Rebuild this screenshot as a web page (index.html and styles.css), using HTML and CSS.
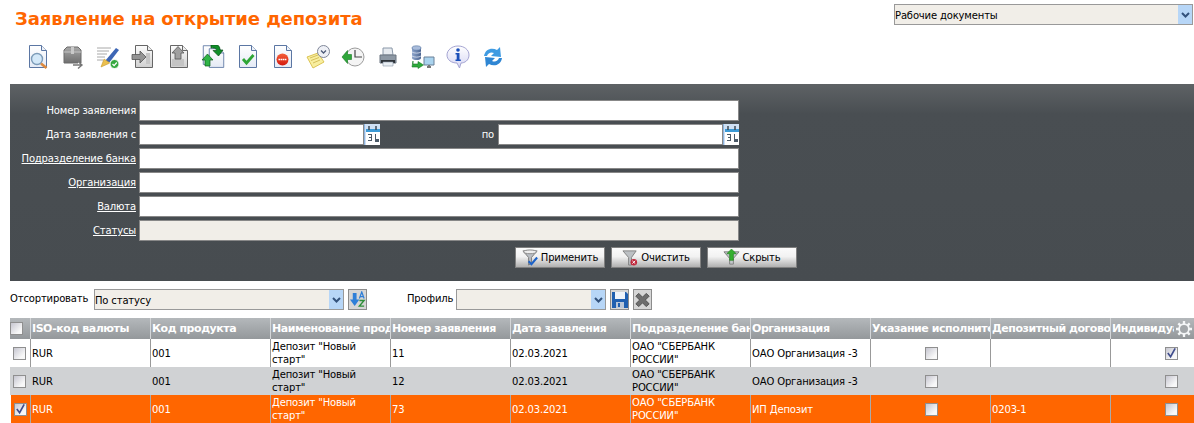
FILE: index.html
```html
<!DOCTYPE html>
<html lang="ru">
<head>
  <meta charset="UTF-8" />
  <title>Заявление на открытие депозита</title>
  <link rel="stylesheet" href="styles.css">
</head>
<body>
  <svg class="defs" width="0" height="0">
    <defs>
      <linearGradient id="gPage" x1="0" y1="0" x2="0" y2="1"><stop offset="0" stop-color="#fff"/><stop offset="1" stop-color="#e4eaf5"/></linearGradient>
      <linearGradient id="gGrey" x1="0" y1="0" x2="0" y2="1"><stop offset="0" stop-color="#fdfdfd"/><stop offset="1" stop-color="#d0d0d0"/></linearGradient>
      <linearGradient id="gBox" x1="0" y1="0" x2="0" y2="1"><stop offset="0" stop-color="#a9a9a9"/><stop offset="1" stop-color="#6f6f6f"/></linearGradient>
      <linearGradient id="gStop" x1="0" y1="0" x2="0" y2="1"><stop offset="0" stop-color="#f4603a"/><stop offset="1" stop-color="#d3190f"/></linearGradient>
      <linearGradient id="gDb" x1="0" y1="0" x2="1" y2="0"><stop offset="0" stop-color="#8fa6cc"/><stop offset="1" stop-color="#4b648f"/></linearGradient>
      <linearGradient id="gBulb" x1="0" y1="0" x2="0" y2="1"><stop offset="0" stop-color="#fff"/><stop offset="1" stop-color="#d6d6f4"/></linearGradient>
      <symbol id="page" viewBox="0 0 20 24"><path d="M1.500 .5h12l5 5v17h-17z" fill="url(#gPage)" stroke="#5b76a3"/><path d="M13.500 .5v5h5" fill="#eef2f8" stroke="#5b76a3"/></symbol>
      <symbol id="pageGrey" viewBox="0 0 20 24"><path d="M1.500 .5h12l5 5v17h-17z" fill="url(#gGrey)" stroke="#666"/><path d="M13.500 .5v5h5" fill="#eee" stroke="#666"/></symbol>
      <symbol id="calIcon" viewBox="0 0 16 21"><rect width="16" height="21" fill="#cfe0f4"/><rect width="1" height="21" fill="#8fb5e0"/><rect x="2" y="5" width="14" height="16" fill="#fff"/><rect x="2" y="5" width="14" height="3" fill="#3c9ad6"/><path d="M5 2v4M12 2v4" stroke="#3e4a55" stroke-width="1.500"/><path d="M4 10h4v7H4v-1h3v-2H5v-1h2v-2H4z" fill="#4c5a68"/><path d="M11 10h1v5h3v3h-4z" fill="#4c5a68"/></symbol>
      <symbol id="chevron" viewBox="0 0 9 6"><path d="M1 1l3.500 3.500L8 1" fill="none" stroke="#33527c" stroke-width="2"/></symbol>
      <symbol id="tick" viewBox="0 0 12 12"><path d="M2 6l3 4 5-9" fill="none" stroke="#3f4c8c" stroke-width="1.800"/></symbol>
    </defs>
  </svg>

  <div class="top">
    <h1 class="title">Заявление на открытие депозита</h1>
    <div class="select select-docs"><span class="select-text">Рабочие документы</span><span class="select-arrow"><svg width="9" height="6"><use href="#chevron"/></svg></span></div>
  </div>

  <div class="toolbar">
    <svg class="tool" viewBox="0 0 24 24"><use href="#page" width="20" height="24" x="2"/><circle cx="11" cy="14" r="5.500" fill="#d3e8f8" stroke="#7c9bb8" stroke-width="1.400"/><path d="M15 18.500l5.500 4.500" stroke="#dd8a3e" stroke-width="2.600"/></svg>
    <svg class="tool" viewBox="0 0 24 24"><path d="M3 5l3-3h11l3 3v13H3z" fill="url(#gBox)" stroke="#6b6b6b"/><path d="M3 7h17" stroke="#c4c4c4"/><path d="M10 2h3v7h-3z" fill="#c9c9c9"/><path d="M12 20h8m-3-3.500l4 3.500-4 3.500" fill="#fff" stroke="#777" stroke-width="1.400"/></svg>
    <svg class="tool" viewBox="0 0 24 24"><path d="M1 3h14M1 6h12M1 9h10M1 12h8M1 15h6" stroke="#a8a8a8"/><path d="M9 16L20 3l3 2-10 13z" fill="#3d66b5"/><path d="M5 22l3-8 6 4z" fill="#ecc04f" stroke="#c69a2c" stroke-width=".6"/><circle cx="18.500" cy="19" r="4.500" fill="#35a83f" stroke="#fff"/><path d="M16.500 19l1.600 1.600 2.700-3.100" fill="none" stroke="#fff" stroke-width="1.300"/></svg>
    <svg class="tool" viewBox="0 0 24 24"><use href="#pageGrey" width="20" height="24" x="3"/><path d="M1 9.500h8V6l6 6-6 6v-3.500H1z" fill="#949494" stroke="#555" stroke-width=".8"/><path d="M15 8h4v11h-4z" fill="#c6c6c6"/></svg>
    <svg class="tool" viewBox="0 0 24 24"><use href="#pageGrey" width="20" height="24" x="3"/><path d="M6 14h12v7H6z" fill="#c4c4c4"/><path d="M12 1.500L18 8h-3v6H9V8H6z" fill="#a0a0a0" stroke="#555" stroke-width=".8"/></svg>
    <svg class="tool" viewBox="0 0 24 24"><use href="#page" width="17" height="21" x="1"/><use href="#page" width="17" height="21" x="7" y="3"/><path d="M10 0h5c3 0 4 2 4 5h3l-4.500 6-5.500-5.500h3.500c0-2-2-3-5.500-2.500z" fill="#0f8f28" stroke="#0a4d15" stroke-width=".7"/><path d="M1 15l5.500-6 5.500 6H9v6H4v-6z" fill="#2fb447" stroke="#0b5d19" stroke-width=".7"/></svg>
    <svg class="tool" viewBox="0 0 24 24"><use href="#page" width="20" height="24" x="2"/><path d="M7 14l3.500 4L17.500 10" fill="none" stroke="#2ea636" stroke-width="2.800"/></svg>
    <svg class="tool" viewBox="0 0 24 24"><use href="#page" width="20" height="24" x="2"/><circle cx="11.500" cy="14.500" r="6" fill="url(#gStop)"/><path d="M7.500 14.500h8" stroke="#fff" stroke-width="1.700" stroke-dasharray="1.600 .5"/></svg>
    <svg class="tool" viewBox="0 0 24 24"><path d="M1 12l11-4 6 9-11 6z" fill="#f8ee9f" stroke="#dcc455"/><path d="M4 13l8-3M5 15.500l8-3M7 18l7-3" stroke="#cbb24a" stroke-width=".8"/><circle cx="17.500" cy="6.500" r="6" fill="#eef0f6" stroke="#7f8698"/><path d="M15 5.500l2.500 2.500 2.500-2.500" fill="none" stroke="#4c5a78" stroke-width="1.300"/></svg>
    <svg class="tool" viewBox="0 0 24 24"><circle cx="14" cy="12" r="9" fill="#f4f4f4" stroke="#9c9c9c"/><path d="M14 5v7h7" fill="none" stroke="#444" stroke-width="1.200"/><path d="M1 12l5.500-6.500v4h4v5h-4v4z" fill="#2fa63a" stroke="#167a22" stroke-width=".6"/></svg>
    <svg class="tool" viewBox="0 0 24 24"><path d="M7 3h9l1 7H7z" fill="#e7ebf0" stroke="#8a98a8"/><path d="M4 10h16v8H4z" fill="#8d98a4" stroke="#6a7480"/><path d="M5 15h14v3H5z" fill="#2f3439"/><path d="M7 17h10v4H7z" fill="#eaeff4" stroke="#8a98a8" stroke-width=".6"/></svg>
    <svg class="tool" viewBox="0 0 24 24"><path d="M1 3v10c0 1.500 2.200 2 4.500 2s4.500-.5 4.500-2V3z" fill="url(#gDb)"/><ellipse cx="5.500" cy="3" rx="4.500" ry="2.200" fill="#a9bcdb" stroke="#56739f" stroke-width=".6"/><path d="M1 7c2 1.500 7 1.500 9 0M1 11c2 1.500 7 1.500 9 0" fill="none" stroke="#dfe6f2" stroke-width=".8"/><path d="M13 12h10v8H13z" fill="#a9d3ee" stroke="#6a8098"/><path d="M16 22h4M18 20v2" stroke="#777" stroke-width="2"/><path d="M2 16v3h5v-2.500l5.500 3.500L7 23.500V22H1z" fill="#2eaa3c" stroke="#167a22" stroke-width=".6"/></svg>
    <svg class="tool" viewBox="0 0 24 24"><path d="M12 1c6 0 11 3.500 11 9s-4.500 8-8 8l-1.500 5L11 18C5.500 18 1 15 1 10S6 1 12 1z" fill="url(#gBulb)" stroke="#a4a4d2"/><circle cx="12" cy="5" r="1.800" fill="#1b4fb8"/><path d="M9.500 8h4v6.500h1.300V16H9.500v-1.500h1.200V9.500H9.500z" fill="#1b4fb8"/></svg>
    <svg class="tool" viewBox="0 0 24 24"><path d="M3 11C4 4 11 2 16 5l3-3 1 10-10-1 3-3c-3-1.500-6 0-7 3z" fill="#3f9be2"/><path d="M21 13c-1 7-8 9-13 6l-3 3-1-10 10 1-3 3c3 1.500 6 0 7-3z" fill="#2f86d3"/></svg>
  </div>

  <form class="filter">
    <div class="row"><label class="lbl">Номер заявления</label><span class="field wide"></span></div>
    <div class="row">
      <label class="lbl">Дата заявления с</label>
      <span class="date"><span class="field grow"></span><svg class="cal" width="16" height="21"><use href="#calIcon"/></svg></span>
      <label class="lbl-to">по</label>
      <span class="date"><span class="field grow"></span><svg class="cal" width="16" height="21"><use href="#calIcon"/></svg></span>
    </div>
    <div class="row"><a class="lbl link">Подразделение банка</a><span class="field wide"></span></div>
    <div class="row"><a class="lbl link">Организация</a><span class="field wide"></span></div>
    <div class="row"><a class="lbl link">Валюта</a><span class="field wide"></span></div>
    <div class="row"><a class="lbl link">Статусы</a><span class="field wide readonly"></span></div>
    <div class="actions">
      <button type="button" class="btn">
        <svg width="17" height="17" viewBox="0 0 18 18"><path d="M1 2h15L10 9v6l-3 2V9z" fill="#b9bec4" stroke="#777"/><ellipse cx="8.500" cy="3" rx="7" ry="2" fill="#eee" stroke="#888"/><path d="M7 13l3 3 6-7" fill="none" stroke="#1c62c8" stroke-width="2.200"/></svg>
        Применить</button>
      <button type="button" class="btn">
        <svg width="17" height="17" viewBox="0 0 18 18"><path d="M1 2h14L10 9v8H7V9z" fill="#bcc0c4" stroke="#808080"/><circle cx="12.500" cy="14" r="3.500" fill="#c0283c"/><path d="M11 12.500l3 3m0-3l-3 3" stroke="#fff"/></svg>
        Очистить</button>
      <button type="button" class="btn">
        <svg width="17" height="17" viewBox="0 0 18 18"><path d="M1 3h16l-6 7v6H7v-6z" fill="#c2c6ca" stroke="#808080"/><path d="M9 0l5 5h-3v7H7V5H4z" fill="#35b02f" stroke="#1a7a18" stroke-width=".6"/></svg>
        Скрыть</button>
    </div>
  </form>

  <div class="sortbar">
    <label class="sort-lbl">Отсортировать</label>
    <div class="select select-sort"><span class="select-text">По статусу</span><span class="select-arrow"><svg width="9" height="6"><use href="#chevron"/></svg></span></div>
    <span class="sq"><svg width="17" height="17" viewBox="0 0 18 18"><path d="M4 2h4v7h3l-5 7-5-7h3z" fill="#2f7fd8"/><path d="M11 8l2.500-7L16 8m-4-2h3" fill="none" stroke="#2f7fd8" stroke-width="1.300"/><path d="M11 10h5l-5 6h5" fill="none" stroke="#2f8f3a" stroke-width="1.500"/></svg></span>
    <label class="profile-lbl">Профиль</label>
    <div class="select select-profile"><span class="select-text"></span><span class="select-arrow"><svg width="9" height="6"><use href="#chevron"/></svg></span></div>
    <span class="sq"><svg width="16" height="16" viewBox="0 0 16 16"><path d="M0 0h14l2 2v14H0z" fill="#1f5fb0"/><rect x="3" y="0" width="10" height="7" fill="#eef3fa"/><rect x="4" y="10" width="8" height="6" fill="#b9c6d8"/><rect x="6" y="11" width="2" height="4" fill="#1f5fb0"/></svg></span>
    <span class="sq"><svg width="18" height="18" viewBox="0 0 18 18"><path d="M2 5l3-3 4 4 4-4 3 3-4 4 4 4-3 3-4-4-4 4-3-3 4-4z" fill="#6d6d6d" stroke="#4e4e4e"/></svg></span>
  </div>

  <table class="grid">
    <colgroup>
      <col class="c0"><col class="c1"><col class="c1"><col class="c1"><col class="c1"><col class="c1"><col class="c1"><col class="c1"><col class="c1"><col class="c1"><col class="c2">
    </colgroup>
    <thead>
      <tr>
        <th class="check-col"><span class="cb"></span></th>
        <th><div class="th-in">ISO-код валюты</div></th>
        <th><div class="th-in">Код продукта</div></th>
        <th><div class="th-in">Наименование продукта</div></th>
        <th><div class="th-in">Номер заявления</div></th>
        <th><div class="th-in">Дата заявления</div></th>
        <th><div class="th-in">Подразделение банка</div></th>
        <th><div class="th-in">Организация</div></th>
        <th><div class="th-in">Указание исполнителя</div></th>
        <th><div class="th-in">Депозитный договор</div></th>
        <th><div class="th-in th-short">Индивидуальные</div>
          <svg class="gear" width="16" height="16" viewBox="0 0 18 18"><g stroke="#f4f6f7" stroke-width="2.600"><path d="M9 0v18M0 9h18M2.600 2.600l12.800 12.800M15.400 2.600L2.600 15.400"/></g><circle cx="9" cy="9" r="5.500" fill="#a3a7aa" stroke="#f4f6f7" stroke-width="2"/></svg>
        </th>
      </tr>
    </thead>
    <tbody>
      <tr>
        <td class="check-col"><span class="cb"></span></td>
        <td>RUR</td><td>001</td><td>Депозит "Новый старт"</td><td>11</td><td>02.03.2021</td><td>ОАО "СБЕРБАНК РОССИИ"</td><td>ОАО Организация -3</td>
        <td class="center"><span class="cb"></span></td><td></td>
        <td class="end"><span class="cb"><svg width="12" height="12"><use href="#tick"/></svg></span></td>
      </tr>
      <tr class="alt">
        <td class="check-col"><span class="cb"></span></td>
        <td>RUR</td><td>001</td><td>Депозит "Новый старт"</td><td>12</td><td>02.03.2021</td><td>ОАО "СБЕРБАНК РОССИИ"</td><td>ОАО Организация -3</td>
        <td class="center"><span class="cb"></span></td><td></td>
        <td class="end"><span class="cb"></span></td>
      </tr>
      <tr class="sel">
        <td class="check-col"><span class="cb"><svg width="12" height="12"><use href="#tick"/></svg></span></td>
        <td>RUR</td><td>001</td><td>Депозит "Новый старт"</td><td>73</td><td>02.03.2021</td><td>ОАО "СБЕРБАНК РОССИИ"</td><td>ИП Депозит</td>
        <td class="center"><span class="cb"></span></td><td>0203-1</td>
        <td class="end"><span class="cb"></span></td>
      </tr>
    </tbody>
  </table>
</body>
</html>
```

FILE: styles.css
```css
* { box-sizing: border-box; }
html, body { height: 423px; overflow: hidden; }
body {
  margin: 0;
  padding-left: 10px;
  background-color: #fff;
  font-family: "DejaVu Sans", sans-serif;
  font-size: 10px;
  letter-spacing: -0.15px;
  color: #000;
}
.defs { position: absolute; }

.top {
  display: flex;
  justify-content: space-between;
  height: 41px;
}
.title {
  margin: 8px 0 0 5px;
  font-size: 18px;
  line-height: 22px;
  letter-spacing: -0.1px;
  color: #ff6600;
  font-weight: bold;
}
.select {
  display: flex;
  height: 21px;
  border: 1px solid #999;
  background-color: #f1eee8;
}
.select-text { flex: 1; line-height: 21px; white-space: nowrap; overflow: hidden; }
.select-arrow {
  width: 14px;
  display: flex;
  align-items: center;
  justify-content: center;
  background-color: #b7d6f7;
}
.select-docs { width: 299px; margin: 4px 1px 0 0; }

.toolbar {
  display: flex;
  gap: 11px;
  height: 43px;
  padding: 4px 0 0 16px;
}
.tool { width: 24px; height: 24px; flex: none; }

.filter {
  height: 197px;
  padding-top: 16px;
  background: linear-gradient(#5e6265, #494e52 30px, #474c50);
}
.row {
  display: flex;
  height: 24px;
}
.lbl {
  width: 129px;
  padding-right: 3px;
  line-height: 21px;
  text-align: right;
  color: #fff;
  white-space: nowrap;
}
.link { text-decoration: underline; }
.field {
  display: block;
  height: 21px;
  border: 1px solid #888;
  background-color: #fff;
}
.wide { width: 600px; }
.readonly { background-color: #f1eee8; }
.date { display: flex; width: 241px; }
.grow { flex: 1; }
.cal { flex: none; }
.lbl-to { width: 118px; padding-right: 4px; line-height: 21px; text-align: right; color: #fff; }

.actions {
  display: flex;
  gap: 6px;
  margin: 3px 0 0 505px;
}
.btn {
  display: flex;
  align-items: center;
  justify-content: center;
  gap: 2px;
  width: 90px;
  height: 21px;
  padding: 0;
  border: 1px solid #808080;
  background: linear-gradient(#fbfbfb, #f2f2f2 45%, #b0b0b0);
  font-family: inherit;
  font-size: 10px;
  letter-spacing: inherit;
  color: #000;
}

.sortbar {
  display: flex;
  height: 37px;
  padding-top: 8px;
}
.sort-lbl { width: 84px; line-height: 19px; }
.select-sort { width: 250px; }
.select-profile { width: 150px; }
.sq {
  display: flex;
  align-items: center;
  justify-content: center;
  width: 19px;
  height: 21px;
  margin-left: 4px;
  border: 1px solid #8c8c8c;
  background-color: #d6d6d6;
}
.profile-lbl { width: 49px; margin-left: 40px; line-height: 19px; }

.grid {
  table-layout: fixed;
  width: 1184px;
  border-collapse: separate;
  border-spacing: 0;
}
.c0 { width: 21px; }
.c1 { width: 120px; }
.c2 { width: 83px; }
.grid th {
  position: relative;
  height: 21px;
  padding: 0 0 0 1px;
  background: linear-gradient(#b4b8bb, #94989b);
  border-right: 1px solid #d4d6d8;
  color: #fff;
  font-size: 11px;
  letter-spacing: -0.45px;
  font-weight: bold;
  text-align: left;
  overflow: hidden;
}
.th-in { white-space: nowrap; overflow: hidden; }
.th-short { width: 62px; }
.gear { position: absolute; right: 2px; top: 3px; }
.grid td {
  height: 28px;
  padding: 0 1px;
  line-height: 13px;
  border-right: 1px solid #999;
  overflow: hidden;
}
.grid th:last-child, .grid td:last-child { border-right: 0; }
.alt td { background-color: #d0d2d4; border-right-color: #d0d2d4; }
.sel td { background-color: #ff6600; color: #fff; border-right-color: #aaa; }
.sel td:first-child { border-left: 1px solid #fff; }
.check-col { text-align: center; }
.grid .check-col { padding: 0 1px 0 0; }
.center { text-align: center; }
.grid td.center { padding-left: 2px; }
.end { text-align: right; }
.grid td.end { padding-right: 16px; }
.cb {
  display: inline-flex;
  align-items: center;
  justify-content: center;
  width: 13px;
  height: 13px;
  vertical-align: middle;
  border: 1px solid #8f8f8f;
  background: linear-gradient(135deg, #c6c6d0, #f8f8f8 75%);
}
```
